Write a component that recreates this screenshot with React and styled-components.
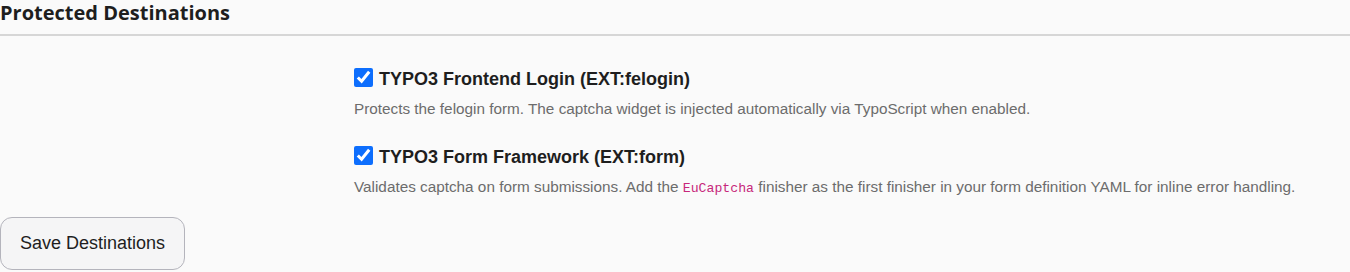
import React from 'react';
import styled, { createGlobalStyle } from 'styled-components';

const GlobalStyle = createGlobalStyle`
  html, body {
    margin: 0;
    padding: 0;
    background: #fafafa;
  }
  body {
    font-family: "Liberation Sans", Arial, sans-serif;
    color: #212529;
  }
`;

const Page = styled.div`
  width: 1350px;
`;

const SectionTitle = styled.h3`
  margin: 0;
  padding: 1px 0 0;
  height: 36px;
  box-sizing: border-box;
  font-family: "Open Sans", "Noto Sans", sans-serif;
  font-size: 20px;
  font-weight: 700;
  line-height: 24px;
  color: #1e1e1e;
  border-bottom: 2px solid #d6d6d6;
`;

const Options = styled.div`
  display: flex;
  flex-direction: column;
  gap: 25px;
  padding: 31px 0 0 354px;
`;

const Option = styled.div`
  display: flex;
  flex-direction: column;
`;

const CheckRow = styled.label`
  display: flex;
  align-items: center;
  gap: 6px;
  cursor: pointer;
`;

const Check = styled.input.attrs({ type: 'checkbox' })`
  width: 19px;
  height: 19px;
  margin: -3px 0 0;
  accent-color: #0d6efd;
`;

const OptionTitle = styled.span`
  font-size: 18px;
  font-weight: 700;
  color: #1e1e1e;
  line-height: 24px;
`;

const Help = styled.p`
  margin: 7px 0 0;
  font-size: 15.3px;
  line-height: 22px;
  color: #6c6c6c;
`;

const Code = styled.code`
  font-family: "Liberation Mono", "DejaVu Sans Mono", monospace;
  font-size: 13.2px;
  color: #c7277a;
`;

const SaveButton = styled.button`
  margin-top: 17px;
  width: 185px;
  height: 53px;
  padding: 0;
  border: 1.5px solid #b4b4bc;
  border-radius: 12px;
  background: #f5f5f6;
  font-family: "Liberation Sans", Arial, sans-serif;
  font-size: 18px;
  color: #1e1e1e;
  cursor: pointer;
`;

export default function App() {
  return (
    <Page>
      <GlobalStyle />
      <SectionTitle>Protected Destinations</SectionTitle>
      <Options>
        <Option>
          <CheckRow>
            <Check defaultChecked />
            <OptionTitle>TYPO3 Frontend Login (EXT:felogin)</OptionTitle>
          </CheckRow>
          <Help>
            Protects the felogin form. The captcha widget is injected automatically via TypoScript when enabled.
          </Help>
        </Option>
        <Option>
          <CheckRow>
            <Check defaultChecked />
            <OptionTitle>TYPO3 Form Framework (EXT:form)</OptionTitle>
          </CheckRow>
          <Help>
            Validates captcha on form submissions. Add the <Code>EuCaptcha</Code> finisher as the first finisher in
            your form definition YAML for inline error handling.
          </Help>
        </Option>
      </Options>
      <SaveButton>Save Destinations</SaveButton>
    </Page>
  );
}
